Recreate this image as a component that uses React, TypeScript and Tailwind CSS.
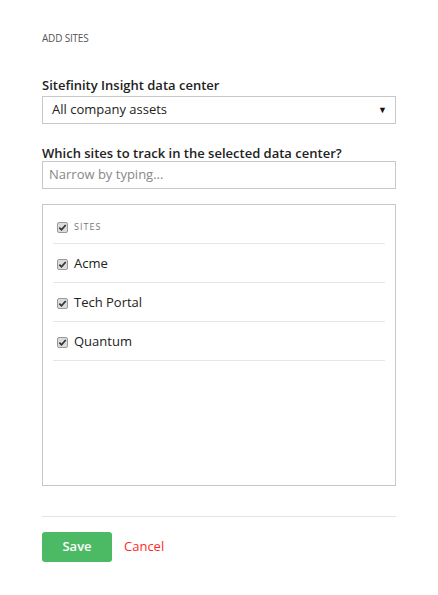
function Check() {
  return (
    <span className="inline-flex h-[11px] w-[11px] shrink-0 items-center justify-center rounded-[2px] border border-[#9a9a9a] bg-[#dcdcdc]">
      <svg viewBox="0 0 10 10" className="h-[9px] w-[9px]">
        <path d="M1.5 5.2 L3.9 7.6 L8.6 2.2" fill="none" stroke="#333" strokeWidth="1.9" />
      </svg>
    </span>
  );
}

const sites = ["Acme", "Tech Portal", "Quantum"];

export default function App() {
  return (
    <div
      className="min-h-[595px] w-[438px] bg-white px-[42px] pt-[31px] text-[#222]"
      style={{ fontFamily: '"Open Sans", sans-serif' }}
    >
      <div className="text-[10px] uppercase leading-[14px] tracking-[-0.2px] text-[#555]">Add sites</div>

      {/* Data center */}
      <div className="mt-[31px] text-[13px] font-semibold leading-[18px]">Sitefinity Insight data center</div>
      <div className="mt-[2px] flex h-[28px] items-center justify-between border border-[#c8c8c8] pl-[9px] pr-[8px] text-[13px]">
        <span>All company assets</span>
        <span className="text-[9px] text-[#111]">▼</span>
      </div>

      {/* Sites */}
      <div className="mt-[20px] text-[13px] font-semibold leading-[18px]">Which sites to track in the selected data center?</div>
      <div className="mt-[-1px] flex h-[28px] items-center border border-[#c8c8c8] pl-[6px] text-[13px] text-[#888]">
        Narrow by typing...
      </div>

      <div className="mt-[15px] h-[282px] border border-[#c8c8c8] px-[10px] pt-[12px]">
        <div className="flex h-[27px] items-center gap-[6px] border-b border-[#e6e6e6] pb-[6px] pl-[4px]">
          <Check />
          <span className="text-[9px] uppercase tracking-[1px] text-[#777]">Sites</span>
        </div>
        {sites.map((s) => (
          <div key={s} className="flex h-[39px] items-center gap-[6px] border-b border-[#e6e6e6] pl-[4px] pt-[2px] text-[13px]">
            <Check />
            <span>{s}</span>
          </div>
        ))}
      </div>

      <div className="mt-[30px] border-t border-[#e3e3e3]" />
      <div className="mt-[15px] flex items-center gap-[12px]">
        <button className="h-[30px] w-[70px] rounded-[3px] bg-[#4cba64] text-[13px] font-semibold text-white">Save</button>
        <span className="text-[13px] text-[#ff2a2a]">Cancel</span>
      </div>
    </div>
  );
}
